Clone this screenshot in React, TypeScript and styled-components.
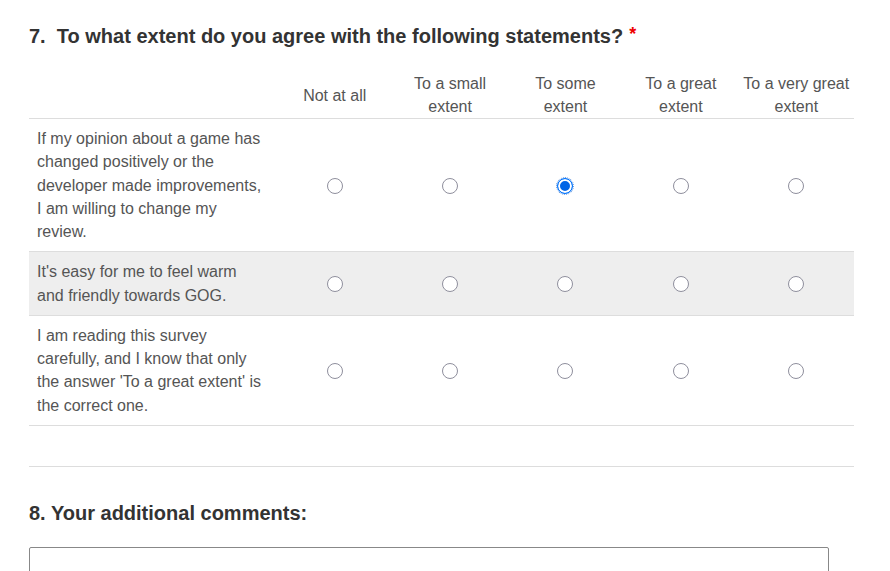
import React from 'react';
import styled, { createGlobalStyle } from 'styled-components';

const GlobalStyle = createGlobalStyle`
  body {
    margin: 0;
    background: #fff;
    font-family: "Liberation Sans", Arial, sans-serif;
  }
`;

const Page = styled.div`
  width: 825px;
  padding: 20px 0 0 29px;
`;

const QuestionTitle = styled.h2`
  margin: 0 0 22px;
  font-size: 20px;
  line-height: 28px;
  font-weight: 700;
  color: #333;
  white-space: pre;
`;

const Required = styled.span`
  color: #e00;
  margin-left: 6px;
  font-size: 18px;
  vertical-align: 3px;
`;

const Grid = styled.table`
  width: 825px;
  border-collapse: collapse;
  table-layout: fixed;
`;

const HeadCell = styled.th`
  font-weight: 400;
  font-size: 16px;
  line-height: 23px;
  color: #555;
  text-align: center;
  vertical-align: middle;
  padding: 0 4px 0;
  border-bottom: 1px solid #ddd;
`;

const Row = styled.tr<{ $alt?: boolean }>`
  background: ${p => (p.$alt ? '#eee' : '#fff')};
`;

const Statement = styled.td`
  font-size: 16px;
  line-height: 23.25px;
  color: #555;
  padding: 8px 12px 8px 8px;
  border-bottom: 1px solid #ddd;
  vertical-align: middle;
`;

const Choice = styled.td`
  text-align: center;
  vertical-align: middle;
  border-bottom: 1px solid #ddd;
  padding: 0;
`;

const Radio = styled.span<{ $checked?: boolean }>`
  display: inline-block;
  box-sizing: border-box;
  width: 16px;
  height: 16px;
  border-radius: 50%;
  vertical-align: middle;
  border: 1px solid ${p => (p.$checked ? '#0075ff' : '#8f8f9d')};
  background: ${p => (p.$checked ? '#0064e6' : '#fff')};
  box-shadow: ${p => (p.$checked ? 'inset 0 0 0 2px #fff' : 'none')};
  outline: ${p => (p.$checked ? '1px dotted #5a8fd8' : 'none')};
  outline-offset: 0;
`;

const Divider = styled.hr`
  border: none;
  border-top: 1px solid #ddd;
  margin: 40px 0 0;
`;

const CommentTitle = styled.h2`
  margin: 32px 0 20px;
  font-size: 20px;
  line-height: 28px;
  font-weight: 700;
  color: #333;
`;

const Comment = styled.textarea`
  display: block;
  box-sizing: border-box;
  width: 800px;
  height: 80px;
  border: 1px solid #888;
  border-radius: 2px;
  resize: none;
`;

const options = [
  ['Not at all'],
  ['To a small', 'extent'],
  ['To some', 'extent'],
  ['To a great', 'extent'],
  ['To a very great', 'extent'],
];

const statements = [
  {
    text: 'If my opinion about a game has changed positively or the developer made improvements, I am willing to change my review.',
    checked: 2,
  },
  { text: "It's easy for me to feel warm and friendly towards GOG.", checked: -1 },
  {
    text: "I am reading this survey carefully, and I know that only the answer 'To a great extent' is the correct one.",
    checked: -1,
  },
];

export default function App() {
  return (
    <Page>
      <GlobalStyle />
      <QuestionTitle>
        {'7.  To what extent do you agree with the following statements?'}
        <Required>*</Required>
      </QuestionTitle>
      <Grid>
        <colgroup>
          <col style={{ width: 248 }} />
          {options.map((_, i) => (
            <col key={i} />
          ))}
        </colgroup>
        <thead>
          <tr>
            <HeadCell />
            {options.map((lines, i) => (
              <HeadCell key={i}>
                {lines.map((l, j) => (
                  <div key={j}>{l}</div>
                ))}
              </HeadCell>
            ))}
          </tr>
        </thead>
        <tbody>
          {statements.map((s, r) => (
            <Row key={r} $alt={r === 1}>
              <Statement>{s.text}</Statement>
              {options.map((_, i) => (
                <Choice key={i}>
                  <Radio $checked={s.checked === i} />
                </Choice>
              ))}
            </Row>
          ))}
        </tbody>
      </Grid>
      <Divider />
      <CommentTitle>8. Your additional comments:</CommentTitle>
      <Comment />
    </Page>
  );
}
